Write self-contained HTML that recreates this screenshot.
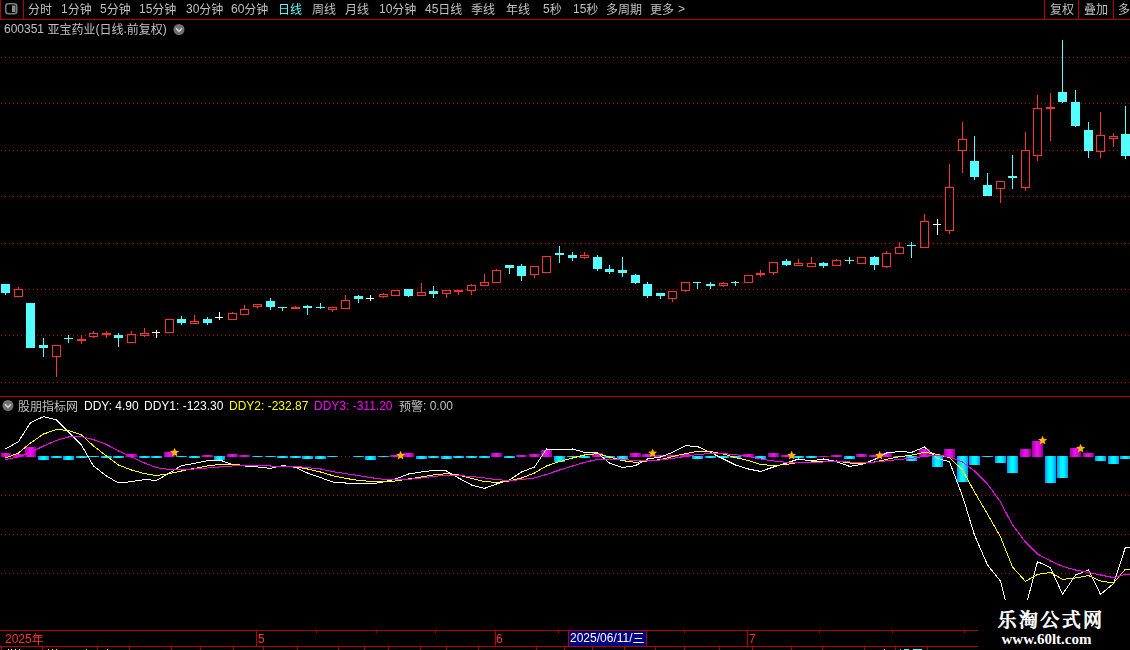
<!DOCTYPE html><html><head><meta charset="utf-8"><title>chart</title><style>
html,body{margin:0;padding:0;background:#000;}
#root{position:relative;width:1130px;height:650px;overflow:hidden;background:#000;font-family:"Liberation Sans","Noto Sans CJK SC",sans-serif;font-size:12px;color:#c0c0c0;}
.c{position:relative;top:1px;}
.t{position:absolute;will-change:transform;white-space:nowrap;line-height:14px;height:14px;}
.wm1{position:absolute;left:980px;top:608px;width:142px;text-align:center;font-family:"Liberation Serif","Noto Serif CJK SC",serif;font-weight:500;-webkit-text-stroke:0.7px #fff;font-size:19px;letter-spacing:2.4px;line-height:26px;color:#fff;white-space:nowrap;}
.wm2{position:absolute;left:979px;top:630px;width:135px;text-align:center;font-family:"Liberation Serif",serif;font-weight:bold;font-size:15px;line-height:18px;color:#fff;white-space:nowrap;}
</style></head><body><div id="root">
<svg width="1130" height="650" viewBox="0 0 1130 650" style="position:absolute;left:0;top:0" shape-rendering="crispEdges">
<defs>
<pattern id="dot" x="1" y="0" width="4" height="1" patternUnits="userSpaceOnUse"><rect x="0" y="0" width="1" height="1" fill="#b00000"/></pattern>
<linearGradient id="gc" x1="0" x2="1" y1="0" y2="0"><stop offset="0" stop-color="#0090ff"/><stop offset="0.3" stop-color="#00e8ff"/><stop offset="0.5" stop-color="#00ffff"/><stop offset="0.7" stop-color="#00e8ff"/><stop offset="1" stop-color="#0090ff"/></linearGradient>
<linearGradient id="gm" x1="0" x2="1" y1="0" y2="0"><stop offset="0" stop-color="#a000a0"/><stop offset="0.3" stop-color="#dc0cdc"/><stop offset="0.5" stop-color="#ee14ee"/><stop offset="0.75" stop-color="#d008d0"/><stop offset="1" stop-color="#880088"/></linearGradient>
<clipPath id="ind"><rect x="0" y="397" width="1130" height="233"/></clipPath>
</defs>
<rect width="1130" height="650" fill="#000"/>
<rect x="0" y="57" width="1130" height="1" fill="url(#dot)"/>
<rect x="0" y="103" width="1130" height="1" fill="url(#dot)"/>
<rect x="0" y="150" width="1130" height="1" fill="url(#dot)"/>
<rect x="0" y="196" width="1130" height="1" fill="url(#dot)"/>
<rect x="0" y="243" width="1130" height="1" fill="url(#dot)"/>
<rect x="0" y="289" width="1130" height="1" fill="url(#dot)"/>
<rect x="0" y="335" width="1130" height="1" fill="url(#dot)"/>
<rect x="0" y="382" width="1130" height="1" fill="url(#dot)"/>
<rect x="0" y="456" width="1130" height="1" fill="url(#dot)"/>
<rect x="0" y="495" width="1130" height="1" fill="url(#dot)"/>
<rect x="0" y="534" width="1130" height="1" fill="url(#dot)"/>
<rect x="0" y="573" width="1130" height="1" fill="url(#dot)"/>
<rect x="5" y="284" width="1" height="11" fill="#54ffff"/>
<rect x="1" y="284" width="9" height="9" fill="#54ffff"/>
<rect x="18" y="287" width="1" height="2" fill="#ff3232"/>
<rect x="14.5" y="289.5" width="8" height="7" fill="none" stroke="#ff3232" stroke-width="1"/>
<rect x="30" y="303" width="1" height="45" fill="#54ffff"/>
<rect x="26" y="303" width="9" height="45" fill="#54ffff"/>
<rect x="43" y="338" width="1" height="19" fill="#54ffff"/>
<rect x="39" y="345" width="9" height="3" fill="#54ffff"/>
<rect x="56" y="357" width="1" height="20" fill="#ff3232"/>
<rect x="52.5" y="345.5" width="8" height="11" fill="none" stroke="#ff3232" stroke-width="1"/>
<rect x="68" y="335" width="1" height="8" fill="#54ffff"/>
<rect x="64" y="338" width="9" height="1" fill="#54ffff"/>
<rect x="81" y="335" width="1" height="9" fill="#ff3232"/>
<rect x="77" y="339" width="9" height="2" fill="#ff3232"/>
<rect x="93" y="331" width="1" height="2" fill="#ff3232"/>
<rect x="93" y="337" width="1" height="1" fill="#ff3232"/>
<rect x="89.5" y="333.5" width="8" height="3" fill="none" stroke="#ff3232" stroke-width="1"/>
<rect x="106" y="331" width="1" height="7" fill="#ff3232"/>
<rect x="102" y="333" width="9" height="2" fill="#ff3232"/>
<rect x="118" y="333" width="1" height="14" fill="#54ffff"/>
<rect x="114" y="335" width="9" height="3" fill="#54ffff"/>
<rect x="131" y="331" width="1" height="3" fill="#ff3232"/>
<rect x="127.5" y="334.5" width="8" height="8" fill="none" stroke="#ff3232" stroke-width="1"/>
<rect x="144" y="328" width="1" height="5" fill="#ff3232"/>
<rect x="144" y="336" width="1" height="1" fill="#ff3232"/>
<rect x="140.5" y="333.5" width="8" height="2" fill="none" stroke="#ff3232" stroke-width="1"/>
<rect x="156" y="330" width="1" height="8" fill="#ffffff"/>
<rect x="152" y="332" width="8" height="1" fill="#ffffff"/>
<rect x="165.5" y="319.5" width="8" height="13" fill="none" stroke="#ff3232" stroke-width="1"/>
<rect x="181" y="316" width="1" height="9" fill="#54ffff"/>
<rect x="177" y="319" width="9" height="4" fill="#54ffff"/>
<rect x="194" y="315" width="1" height="6" fill="#ff3232"/>
<rect x="190.5" y="321.5" width="8" height="2" fill="none" stroke="#ff3232" stroke-width="1"/>
<rect x="207" y="317" width="1" height="8" fill="#54ffff"/>
<rect x="203" y="319" width="9" height="4" fill="#54ffff"/>
<rect x="219" y="312" width="1" height="8" fill="#ffffff"/>
<rect x="215" y="317" width="8" height="1" fill="#ffffff"/>
<rect x="232" y="312" width="1" height="1" fill="#ff3232"/>
<rect x="228.5" y="313.5" width="8" height="6" fill="none" stroke="#ff3232" stroke-width="1"/>
<rect x="244" y="305" width="1" height="4" fill="#ff3232"/>
<rect x="240.5" y="309.5" width="8" height="5" fill="none" stroke="#ff3232" stroke-width="1"/>
<rect x="257" y="307" width="1" height="1" fill="#ff3232"/>
<rect x="253.5" y="304.5" width="8" height="2" fill="none" stroke="#ff3232" stroke-width="1"/>
<rect x="270" y="298" width="1" height="12" fill="#54ffff"/>
<rect x="266" y="301" width="9" height="6" fill="#54ffff"/>
<rect x="282" y="307" width="1" height="4" fill="#54ffff"/>
<rect x="278" y="307" width="9" height="1" fill="#54ffff"/>
<rect x="295" y="306" width="1" height="3" fill="#ff3232"/>
<rect x="291" y="307" width="9" height="2" fill="#ff3232"/>
<rect x="307" y="305" width="1" height="10" fill="#54ffff"/>
<rect x="303" y="306" width="9" height="2" fill="#54ffff"/>
<rect x="320" y="303" width="1" height="6" fill="#54ffff"/>
<rect x="316" y="307" width="9" height="1" fill="#54ffff"/>
<rect x="332" y="310" width="1" height="2" fill="#ff3232"/>
<rect x="328.5" y="307.5" width="8" height="2" fill="none" stroke="#ff3232" stroke-width="1"/>
<rect x="345" y="295" width="1" height="5" fill="#ff3232"/>
<rect x="341.5" y="300.5" width="8" height="8" fill="none" stroke="#ff3232" stroke-width="1"/>
<rect x="358" y="295" width="1" height="8" fill="#54ffff"/>
<rect x="354" y="296" width="9" height="3" fill="#54ffff"/>
<rect x="370" y="295" width="1" height="6" fill="#ffffff"/>
<rect x="366" y="298" width="8" height="1" fill="#ffffff"/>
<rect x="383" y="293" width="1" height="1" fill="#ff3232"/>
<rect x="383" y="297" width="1" height="1" fill="#ff3232"/>
<rect x="379.5" y="294.5" width="8" height="2" fill="none" stroke="#ff3232" stroke-width="1"/>
<rect x="391.5" y="290.5" width="8" height="5" fill="none" stroke="#ff3232" stroke-width="1"/>
<rect x="408" y="289" width="1" height="8" fill="#54ffff"/>
<rect x="404" y="289" width="9" height="7" fill="#54ffff"/>
<rect x="421" y="283" width="1" height="9" fill="#ff3232"/>
<rect x="417.5" y="292.5" width="8" height="3" fill="none" stroke="#ff3232" stroke-width="1"/>
<rect x="433" y="286" width="1" height="12" fill="#54ffff"/>
<rect x="429" y="291" width="9" height="3" fill="#54ffff"/>
<rect x="446" y="294" width="1" height="4" fill="#ff3232"/>
<rect x="442.5" y="290.5" width="8" height="3" fill="none" stroke="#ff3232" stroke-width="1"/>
<rect x="458" y="290" width="1" height="5" fill="#ff3232"/>
<rect x="454" y="290" width="9" height="2" fill="#ff3232"/>
<rect x="471" y="284" width="1" height="1" fill="#ff3232"/>
<rect x="471" y="291" width="1" height="4" fill="#ff3232"/>
<rect x="467.5" y="285.5" width="8" height="5" fill="none" stroke="#ff3232" stroke-width="1"/>
<rect x="484" y="274" width="1" height="8" fill="#ff3232"/>
<rect x="480.5" y="282.5" width="8" height="3" fill="none" stroke="#ff3232" stroke-width="1"/>
<rect x="496" y="269" width="1" height="1" fill="#ff3232"/>
<rect x="492.5" y="270.5" width="8" height="12" fill="none" stroke="#ff3232" stroke-width="1"/>
<rect x="509" y="265" width="1" height="9" fill="#54ffff"/>
<rect x="505" y="265" width="9" height="3" fill="#54ffff"/>
<rect x="521" y="264" width="1" height="17" fill="#54ffff"/>
<rect x="517" y="266" width="9" height="10" fill="#54ffff"/>
<rect x="534" y="275" width="1" height="3" fill="#ff3232"/>
<rect x="530.5" y="266.5" width="8" height="8" fill="none" stroke="#ff3232" stroke-width="1"/>
<rect x="542.5" y="256.5" width="8" height="16" fill="none" stroke="#ff3232" stroke-width="1"/>
<rect x="559" y="246" width="1" height="17" fill="#54ffff"/>
<rect x="555" y="253" width="9" height="2" fill="#54ffff"/>
<rect x="572" y="252" width="1" height="9" fill="#54ffff"/>
<rect x="568" y="255" width="9" height="3" fill="#54ffff"/>
<rect x="584" y="252" width="1" height="3" fill="#ff3232"/>
<rect x="584" y="258" width="1" height="1" fill="#ff3232"/>
<rect x="580.5" y="255.5" width="8" height="2" fill="none" stroke="#ff3232" stroke-width="1"/>
<rect x="597" y="255" width="1" height="16" fill="#54ffff"/>
<rect x="593" y="257" width="9" height="12" fill="#54ffff"/>
<rect x="609" y="265" width="1" height="9" fill="#54ffff"/>
<rect x="605" y="269" width="9" height="3" fill="#54ffff"/>
<rect x="622" y="257" width="1" height="20" fill="#54ffff"/>
<rect x="618" y="270" width="9" height="3" fill="#54ffff"/>
<rect x="635" y="274" width="1" height="10" fill="#54ffff"/>
<rect x="631" y="275" width="9" height="8" fill="#54ffff"/>
<rect x="647" y="282" width="1" height="16" fill="#54ffff"/>
<rect x="643" y="284" width="9" height="12" fill="#54ffff"/>
<rect x="660" y="293" width="1" height="6" fill="#54ffff"/>
<rect x="656" y="293" width="9" height="3" fill="#54ffff"/>
<rect x="672" y="299" width="1" height="3" fill="#ff3232"/>
<rect x="668.5" y="291.5" width="8" height="7" fill="none" stroke="#ff3232" stroke-width="1"/>
<rect x="685" y="291" width="1" height="1" fill="#ff3232"/>
<rect x="681.5" y="282.5" width="8" height="8" fill="none" stroke="#ff3232" stroke-width="1"/>
<rect x="697" y="282" width="1" height="7" fill="#54ffff"/>
<rect x="693" y="282" width="8" height="1" fill="#54ffff"/>
<rect x="710" y="282" width="1" height="7" fill="#54ffff"/>
<rect x="706" y="284" width="9" height="2" fill="#54ffff"/>
<rect x="723" y="282" width="1" height="1" fill="#ff3232"/>
<rect x="723" y="286" width="1" height="1" fill="#ff3232"/>
<rect x="719.5" y="283.5" width="8" height="2" fill="none" stroke="#ff3232" stroke-width="1"/>
<rect x="735" y="281" width="1" height="5" fill="#54ffff"/>
<rect x="731" y="282" width="8" height="1" fill="#54ffff"/>
<rect x="744.5" y="275.5" width="8" height="7" fill="none" stroke="#ff3232" stroke-width="1"/>
<rect x="760" y="270" width="1" height="7" fill="#ff3232"/>
<rect x="756" y="273" width="9" height="2" fill="#ff3232"/>
<rect x="773" y="273" width="1" height="2" fill="#ff3232"/>
<rect x="769.5" y="262.5" width="8" height="10" fill="none" stroke="#ff3232" stroke-width="1"/>
<rect x="786" y="259" width="1" height="7" fill="#54ffff"/>
<rect x="782" y="261" width="9" height="4" fill="#54ffff"/>
<rect x="798" y="259" width="1" height="4" fill="#ff3232"/>
<rect x="794.5" y="263.5" width="8" height="2" fill="none" stroke="#ff3232" stroke-width="1"/>
<rect x="811" y="257" width="1" height="6" fill="#ff3232"/>
<rect x="807.5" y="263.5" width="8" height="3" fill="none" stroke="#ff3232" stroke-width="1"/>
<rect x="823" y="262" width="1" height="6" fill="#54ffff"/>
<rect x="819" y="263" width="9" height="3" fill="#54ffff"/>
<rect x="836" y="259" width="1" height="1" fill="#ff3232"/>
<rect x="832.5" y="260.5" width="8" height="5" fill="none" stroke="#ff3232" stroke-width="1"/>
<rect x="849" y="257" width="1" height="7" fill="#54ffff"/>
<rect x="845" y="260" width="9" height="1" fill="#54ffff"/>
<rect x="857.5" y="257.5" width="8" height="6" fill="none" stroke="#ff3232" stroke-width="1"/>
<rect x="874" y="256" width="1" height="14" fill="#54ffff"/>
<rect x="870" y="257" width="9" height="8" fill="#54ffff"/>
<rect x="886" y="251" width="1" height="2" fill="#ff3232"/>
<rect x="886" y="267" width="1" height="1" fill="#ff3232"/>
<rect x="882.5" y="253.5" width="8" height="13" fill="none" stroke="#ff3232" stroke-width="1"/>
<rect x="899" y="242" width="1" height="5" fill="#ff3232"/>
<rect x="895.5" y="247.5" width="8" height="6" fill="none" stroke="#ff3232" stroke-width="1"/>
<rect x="911" y="242" width="1" height="16" fill="#54ffff"/>
<rect x="907" y="245" width="9" height="1" fill="#54ffff"/>
<rect x="924" y="214" width="1" height="7" fill="#ff3232"/>
<rect x="920.5" y="221.5" width="8" height="26" fill="none" stroke="#ff3232" stroke-width="1"/>
<rect x="937" y="219" width="1" height="16" fill="#ffffff"/>
<rect x="933" y="224" width="8" height="1" fill="#ffffff"/>
<rect x="949" y="164" width="1" height="23" fill="#ff3232"/>
<rect x="949" y="231" width="1" height="3" fill="#ff3232"/>
<rect x="945.5" y="187.5" width="8" height="43" fill="none" stroke="#ff3232" stroke-width="1"/>
<rect x="962" y="122" width="1" height="17" fill="#ff3232"/>
<rect x="962" y="151" width="1" height="22" fill="#ff3232"/>
<rect x="958.5" y="139.5" width="8" height="11" fill="none" stroke="#ff3232" stroke-width="1"/>
<rect x="974" y="136" width="1" height="44" fill="#54ffff"/>
<rect x="970" y="161" width="9" height="16" fill="#54ffff"/>
<rect x="987" y="173" width="1" height="23" fill="#54ffff"/>
<rect x="983" y="185" width="9" height="11" fill="#54ffff"/>
<rect x="1000" y="189" width="1" height="14" fill="#ff3232"/>
<rect x="996.5" y="181.5" width="8" height="7" fill="none" stroke="#ff3232" stroke-width="1"/>
<rect x="1012" y="155" width="1" height="34" fill="#54ffff"/>
<rect x="1008" y="176" width="9" height="2" fill="#54ffff"/>
<rect x="1025" y="132" width="1" height="18" fill="#ff3232"/>
<rect x="1025" y="188" width="1" height="3" fill="#ff3232"/>
<rect x="1021.5" y="150.5" width="8" height="37" fill="none" stroke="#ff3232" stroke-width="1"/>
<rect x="1037" y="95" width="1" height="13" fill="#ff3232"/>
<rect x="1037" y="156" width="1" height="5" fill="#ff3232"/>
<rect x="1033.5" y="108.5" width="8" height="47" fill="none" stroke="#ff3232" stroke-width="1"/>
<rect x="1050" y="93" width="1" height="48" fill="#ff3232"/>
<rect x="1046" y="107" width="9" height="2" fill="#ff3232"/>
<rect x="1062" y="40" width="1" height="63" fill="#54ffff"/>
<rect x="1058" y="92" width="9" height="10" fill="#54ffff"/>
<rect x="1075" y="90" width="1" height="37" fill="#54ffff"/>
<rect x="1071" y="102" width="9" height="24" fill="#54ffff"/>
<rect x="1088" y="122" width="1" height="36" fill="#54ffff"/>
<rect x="1084" y="130" width="9" height="21" fill="#54ffff"/>
<rect x="1100" y="112" width="1" height="23" fill="#ff3232"/>
<rect x="1100" y="152" width="1" height="6" fill="#ff3232"/>
<rect x="1096.5" y="135.5" width="8" height="16" fill="none" stroke="#ff3232" stroke-width="1"/>
<rect x="1113" y="133" width="1" height="3" fill="#ff3232"/>
<rect x="1113" y="139" width="1" height="8" fill="#ff3232"/>
<rect x="1109.5" y="136.5" width="8" height="2" fill="none" stroke="#ff3232" stroke-width="1"/>
<rect x="1125" y="106" width="1" height="53" fill="#54ffff"/>
<rect x="1121" y="134" width="9" height="22" fill="#54ffff"/>
<rect x="1" y="453" width="10" height="4" fill="url(#gm)"/>
<rect x="13" y="454" width="11" height="3" fill="url(#gm)"/>
<rect x="25" y="447" width="11" height="10" fill="url(#gm)"/>
<rect x="38" y="456" width="11" height="4" fill="url(#gc)"/>
<rect x="51" y="456" width="11" height="2" fill="url(#gc)"/>
<rect x="63" y="456" width="11" height="4" fill="url(#gc)"/>
<rect x="76" y="456" width="11" height="2" fill="url(#gc)"/>
<rect x="88" y="456" width="11" height="1" fill="url(#gc)"/>
<rect x="101" y="456" width="11" height="2" fill="url(#gc)"/>
<rect x="113" y="456" width="11" height="2" fill="url(#gc)"/>
<rect x="126" y="454" width="11" height="3" fill="url(#gm)"/>
<rect x="139" y="456" width="11" height="2" fill="url(#gc)"/>
<rect x="151" y="456" width="11" height="2" fill="url(#gc)"/>
<rect x="164" y="452" width="11" height="5" fill="url(#gm)"/>
<rect x="176" y="456" width="11" height="1" fill="url(#gc)"/>
<rect x="189" y="456" width="11" height="2" fill="url(#gc)"/>
<rect x="202" y="455" width="11" height="2" fill="url(#gm)"/>
<rect x="214" y="456" width="11" height="4" fill="url(#gc)"/>
<rect x="227" y="454" width="11" height="3" fill="url(#gm)"/>
<rect x="239" y="455" width="11" height="2" fill="url(#gm)"/>
<rect x="252" y="456" width="11" height="1" fill="url(#gc)"/>
<rect x="265" y="456" width="11" height="1" fill="url(#gc)"/>
<rect x="277" y="456" width="11" height="2" fill="url(#gc)"/>
<rect x="290" y="456" width="11" height="2" fill="url(#gc)"/>
<rect x="302" y="456" width="11" height="3" fill="url(#gc)"/>
<rect x="315" y="456" width="11" height="3" fill="url(#gc)"/>
<rect x="327" y="456" width="11" height="1" fill="url(#gc)"/>
<rect x="353" y="456" width="11" height="1" fill="url(#gc)"/>
<rect x="365" y="456" width="11" height="4" fill="url(#gc)"/>
<rect x="378" y="456" width="11" height="1" fill="url(#gc)"/>
<rect x="390" y="455" width="11" height="2" fill="url(#gm)"/>
<rect x="403" y="453" width="11" height="4" fill="url(#gm)"/>
<rect x="416" y="456" width="11" height="3" fill="url(#gc)"/>
<rect x="428" y="456" width="11" height="2" fill="url(#gc)"/>
<rect x="441" y="456" width="11" height="3" fill="url(#gc)"/>
<rect x="453" y="456" width="11" height="2" fill="url(#gc)"/>
<rect x="466" y="456" width="11" height="2" fill="url(#gc)"/>
<rect x="479" y="456" width="11" height="2" fill="url(#gc)"/>
<rect x="491" y="453" width="11" height="4" fill="url(#gm)"/>
<rect x="504" y="456" width="11" height="2" fill="url(#gc)"/>
<rect x="516" y="455" width="11" height="2" fill="url(#gm)"/>
<rect x="529" y="454" width="11" height="3" fill="url(#gm)"/>
<rect x="541" y="450" width="11" height="7" fill="url(#gm)"/>
<rect x="554" y="456" width="11" height="6" fill="url(#gc)"/>
<rect x="567" y="456" width="11" height="1" fill="url(#gc)"/>
<rect x="579" y="456" width="11" height="2" fill="url(#gc)"/>
<rect x="592" y="453" width="11" height="4" fill="url(#gm)"/>
<rect x="604" y="456" width="11" height="2" fill="url(#gc)"/>
<rect x="617" y="456" width="11" height="4" fill="url(#gc)"/>
<rect x="630" y="453" width="11" height="4" fill="url(#gm)"/>
<rect x="642" y="454" width="11" height="3" fill="url(#gm)"/>
<rect x="655" y="455" width="11" height="2" fill="url(#gm)"/>
<rect x="667" y="455" width="11" height="2" fill="url(#gm)"/>
<rect x="680" y="454" width="11" height="3" fill="url(#gm)"/>
<rect x="692" y="456" width="11" height="3" fill="url(#gc)"/>
<rect x="705" y="456" width="11" height="2" fill="url(#gc)"/>
<rect x="718" y="456" width="11" height="2" fill="url(#gc)"/>
<rect x="730" y="456" width="11" height="2" fill="url(#gc)"/>
<rect x="743" y="454" width="11" height="3" fill="url(#gm)"/>
<rect x="755" y="456" width="11" height="3" fill="url(#gc)"/>
<rect x="768" y="453" width="11" height="4" fill="url(#gm)"/>
<rect x="781" y="455" width="11" height="2" fill="url(#gm)"/>
<rect x="793" y="456" width="11" height="2" fill="url(#gc)"/>
<rect x="806" y="456" width="11" height="2" fill="url(#gc)"/>
<rect x="818" y="456" width="11" height="1" fill="url(#gm)"/>
<rect x="831" y="455" width="11" height="2" fill="url(#gm)"/>
<rect x="844" y="456" width="11" height="3" fill="url(#gc)"/>
<rect x="856" y="454" width="11" height="3" fill="url(#gm)"/>
<rect x="869" y="455" width="11" height="2" fill="url(#gm)"/>
<rect x="881" y="453" width="11" height="4" fill="url(#gm)"/>
<rect x="894" y="456" width="11" height="1" fill="url(#gc)"/>
<rect x="906" y="456" width="11" height="5" fill="url(#gc)"/>
<rect x="919" y="449" width="11" height="8" fill="url(#gm)"/>
<rect x="932" y="456" width="11" height="11" fill="url(#gc)"/>
<rect x="944" y="449" width="11" height="8" fill="url(#gm)"/>
<rect x="957" y="456" width="11" height="26" fill="url(#gc)"/>
<rect x="969" y="456" width="11" height="9" fill="url(#gc)"/>
<rect x="982" y="456" width="11" height="1" fill="url(#gc)"/>
<rect x="995" y="456" width="11" height="7" fill="url(#gc)"/>
<rect x="1007" y="456" width="11" height="17" fill="url(#gc)"/>
<rect x="1020" y="449" width="11" height="8" fill="url(#gm)"/>
<rect x="1032" y="441" width="11" height="16" fill="url(#gm)"/>
<rect x="1045" y="456" width="11" height="27" fill="url(#gc)"/>
<rect x="1057" y="456" width="11" height="22" fill="url(#gc)"/>
<rect x="1070" y="448" width="11" height="9" fill="url(#gm)"/>
<rect x="1083" y="453" width="11" height="4" fill="url(#gm)"/>
<rect x="1095" y="456" width="11" height="5" fill="url(#gc)"/>
<rect x="1108" y="456" width="11" height="8" fill="url(#gc)"/>
<rect x="1120" y="456" width="11" height="3" fill="url(#gc)"/>
<polyline points="5.5,449.0 18.5,441.6 30.5,422.6 43.5,416.6 56.5,420.0 68.5,432.0 81.5,445.0 93.5,466.0 106.5,476.0 118.5,483.0 131.5,481.6 144.5,479.6 156.5,480.4 169.5,473.0 181.5,465.6 194.5,463.4 207.5,460.6 219.5,460.0 232.5,464.4 244.5,466.0 257.5,467.0 270.5,468.4 282.5,465.6 295.5,467.4 307.5,473.0 320.5,477.6 332.5,482.0 345.5,483.0 358.5,483.0 370.5,484.0 383.5,482.0 395.5,479.0 408.5,474.0 421.5,472.0 433.5,470.4 446.5,471.0 458.5,478.0 471.5,485.0 484.5,488.4 496.5,484.0 509.5,480.0 521.5,472.0 534.5,467.0 546.5,449.0 559.5,450.0 572.5,449.0 584.5,452.4 597.5,453.0 609.5,463.0 622.5,467.6 635.5,465.6 647.5,459.0 660.5,457.0 672.5,452.4 685.5,445.6 697.5,446.6 710.5,452.4 723.5,459.0 735.5,465.0 748.5,469.0 760.5,471.4 773.5,467.0 786.5,463.0 798.5,459.0 811.5,461.0 823.5,459.0 836.5,461.6 849.5,466.4 861.5,464.4 874.5,459.5 886.5,453.0 899.5,451.4 911.5,452.4 924.5,447.0 937.5,458.2 949.5,461.9 962.5,496.0 974.5,535.0 987.5,565.0 1000.5,581.0 1012.5,629.0 1025.5,608.0 1037.5,561.6 1050.5,567.6 1062.5,594.4 1075.5,575.0 1088.5,570.0 1100.5,594.4 1113.5,583.6 1125.5,547.0 1130,547.0" fill="none" stroke="#ffffff" stroke-width="1" shape-rendering="crispEdges" clip-path="url(#ind)"/>
<polyline points="5.5,458.0 18.5,453.0 30.5,443.0 43.5,434.0 56.5,429.6 68.5,430.4 81.5,435.0 93.5,446.0 106.5,456.0 118.5,465.0 131.5,470.0 144.5,473.6 156.5,475.6 169.5,473.6 181.5,471.0 194.5,468.4 207.5,466.0 219.5,464.4 232.5,464.4 244.5,465.4 257.5,465.4 270.5,466.0 282.5,466.0 295.5,466.6 307.5,469.0 320.5,472.0 332.5,475.6 345.5,478.4 358.5,480.4 370.5,481.4 383.5,481.4 395.5,481.0 408.5,479.0 421.5,477.0 433.5,475.0 446.5,473.6 458.5,475.0 471.5,478.4 484.5,481.6 496.5,482.4 509.5,481.0 521.5,478.0 534.5,473.0 546.5,466.0 559.5,461.6 572.5,458.0 584.5,455.0 597.5,453.6 609.5,457.0 622.5,460.6 635.5,462.4 647.5,461.0 660.5,459.6 672.5,456.6 685.5,453.6 697.5,451.4 710.5,451.6 723.5,454.0 735.5,457.6 748.5,460.6 760.5,464.4 773.5,465.6 786.5,464.4 798.5,462.4 811.5,462.0 823.5,461.6 836.5,461.0 849.5,463.0 861.5,463.6 874.5,461.9 886.5,459.4 899.5,456.8 911.5,455.1 924.5,452.3 937.5,454.5 949.5,457.5 962.5,470.0 974.5,492.0 987.5,514.0 1000.5,537.0 1012.5,567.0 1025.5,581.4 1037.5,574.4 1050.5,572.4 1062.5,579.4 1075.5,578.0 1088.5,575.6 1100.5,581.0 1113.5,583.0 1125.5,569.0 1130,569.0" fill="none" stroke="#ffff00" stroke-width="1" shape-rendering="crispEdges" clip-path="url(#ind)"/>
<polyline points="5.5,459.6 18.5,457.0 30.5,452.4 43.5,446.0 56.5,440.4 68.5,437.0 81.5,436.6 93.5,439.6 106.5,444.4 118.5,451.0 131.5,457.0 144.5,463.0 156.5,467.6 169.5,469.6 181.5,469.6 194.5,469.0 207.5,468.0 219.5,467.0 232.5,466.0 244.5,465.4 257.5,465.4 270.5,466.0 282.5,466.0 295.5,466.4 307.5,467.6 320.5,469.0 332.5,471.6 345.5,473.6 358.5,475.6 370.5,477.6 383.5,479.4 395.5,479.6 408.5,479.4 421.5,478.0 433.5,476.4 446.5,475.3 458.5,475.6 471.5,476.4 484.5,478.0 496.5,479.6 509.5,480.6 521.5,479.6 534.5,478.0 546.5,474.4 559.5,470.0 572.5,466.0 584.5,462.4 597.5,459.4 609.5,459.0 622.5,459.6 635.5,460.4 647.5,460.4 660.5,460.0 672.5,458.4 685.5,456.4 697.5,454.4 710.5,453.6 723.5,453.6 735.5,454.6 748.5,456.4 760.5,459.0 773.5,461.0 786.5,462.4 798.5,462.4 811.5,462.4 823.5,462.0 836.5,461.6 849.5,462.0 861.5,462.6 874.5,462.1 886.5,460.9 899.5,459.4 911.5,458.4 924.5,456.3 937.5,455.1 949.5,456.8 962.5,462.0 974.5,471.0 987.5,484.0 1000.5,502.0 1012.5,525.0 1025.5,542.0 1037.5,554.0 1050.5,561.0 1062.5,566.4 1075.5,570.0 1088.5,572.4 1100.5,575.0 1113.5,577.6 1125.5,574.4 1130,574.4" fill="none" stroke="#ff00ff" stroke-width="1" shape-rendering="crispEdges" clip-path="url(#ind)"/>
<polygon points="174.60,447.70 175.90,450.71 179.17,451.02 176.70,453.18 177.42,456.38 174.60,454.71 171.78,456.38 172.50,453.18 170.03,451.02 173.30,450.71" fill="#ffb400" shape-rendering="auto"/>
<polygon points="400.60,450.70 401.90,453.71 405.17,454.02 402.70,456.18 403.42,459.38 400.60,457.71 397.78,459.38 398.50,456.18 396.03,454.02 399.30,453.71" fill="#ffb400" shape-rendering="auto"/>
<polygon points="652.60,448.50 653.90,451.51 657.17,451.82 654.70,453.98 655.42,457.18 652.60,455.51 649.78,457.18 650.50,453.98 648.03,451.82 651.30,451.51" fill="#ffb400" shape-rendering="auto"/>
<polygon points="791.60,450.70 792.90,453.71 796.17,454.02 793.70,456.18 794.42,459.38 791.60,457.71 788.78,459.38 789.50,456.18 787.03,454.02 790.30,453.71" fill="#ffb400" shape-rendering="auto"/>
<polygon points="879.60,450.70 880.90,453.71 884.17,454.02 881.70,456.18 882.42,459.38 879.60,457.71 876.78,459.38 877.50,456.18 875.03,454.02 878.30,453.71" fill="#ffb400" shape-rendering="auto"/>
<polygon points="1042.60,435.70 1043.90,438.71 1047.17,439.02 1044.70,441.18 1045.42,444.38 1042.60,442.71 1039.78,444.38 1040.50,441.18 1038.03,439.02 1041.30,438.71" fill="#ffb400" shape-rendering="auto"/>
<polygon points="1080.60,443.70 1081.90,446.71 1085.17,447.02 1082.70,449.18 1083.42,452.38 1080.60,450.71 1077.78,452.38 1078.50,449.18 1076.03,447.02 1079.30,446.71" fill="#ffb400" shape-rendering="auto"/>
<rect x="0" y="396" width="1130" height="1" fill="#b40000"/>
<rect x="0" y="19" width="1130" height="1" fill="#b40000"/>
<rect x="0" y="0" width="1" height="20" fill="#b40000"/>
<rect x="23" y="0" width="1" height="20" fill="#b40000"/>
<rect x="1044" y="0" width="1" height="20" fill="#b40000"/>
<rect x="1078" y="0" width="1" height="20" fill="#b40000"/>
<rect x="1113" y="0" width="1" height="20" fill="#b40000"/>
<rect x="5.75" y="3.75" width="11" height="10" rx="2.5" ry="2.5" fill="none" stroke="#7c7c7c" stroke-width="1.5" shape-rendering="auto"/>
<rect x="12" y="5.5" width="3.5" height="6.5" fill="#8c8c8c" shape-rendering="auto"/>
<rect x="0" y="630" width="978" height="1" fill="#b40000"/>
<rect x="0" y="646" width="978" height="1" fill="#b40000"/>
<rect x="256" y="630" width="1" height="17" fill="#b40000"/>
<rect x="495" y="630" width="1" height="17" fill="#b40000"/>
<rect x="747" y="630" width="1" height="17" fill="#b40000"/>
<rect x="316" y="630" width="1" height="3" fill="#b40000"/>
<rect x="376" y="630" width="1" height="3" fill="#b40000"/>
<rect x="435" y="630" width="1" height="3" fill="#b40000"/>
<rect x="558" y="630" width="1" height="3" fill="#b40000"/>
<rect x="684" y="630" width="1" height="3" fill="#b40000"/>
<rect x="819" y="630" width="1" height="3" fill="#b40000"/>
<rect x="892" y="630" width="1" height="3" fill="#b40000"/>
<rect x="964" y="630" width="1" height="3" fill="#b40000"/>
<rect x="1" y="646" width="1" height="4" fill="#b40000"/>
<rect x="42" y="646" width="1" height="4" fill="#b40000"/>
<rect x="97" y="646" width="1" height="4" fill="#b40000"/>
<rect x="129" y="646" width="1" height="4" fill="#b40000"/>
<rect x="171" y="646" width="1" height="4" fill="#b40000"/>
<rect x="200" y="646" width="1" height="4" fill="#b40000"/>
<rect x="233" y="646" width="1" height="4" fill="#b40000"/>
<rect x="263" y="646" width="1" height="4" fill="#b40000"/>
<rect x="297" y="646" width="1" height="4" fill="#b40000"/>
<rect x="338" y="646" width="1" height="4" fill="#b40000"/>
<rect x="364" y="646" width="1" height="4" fill="#b40000"/>
<rect x="388" y="646" width="1" height="4" fill="#b40000"/>
<rect x="420" y="646" width="1" height="4" fill="#b40000"/>
<rect x="446" y="646" width="1" height="4" fill="#b40000"/>
<rect x="478" y="646" width="1" height="4" fill="#b40000"/>
<rect x="536" y="646" width="1" height="4" fill="#b40000"/>
<rect x="564" y="646" width="1" height="4" fill="#b40000"/>
<rect x="592" y="646" width="1" height="4" fill="#b40000"/>
<rect x="624" y="646" width="1" height="4" fill="#b40000"/>
<rect x="655" y="646" width="1" height="4" fill="#b40000"/>
<rect x="684" y="646" width="1" height="4" fill="#b40000"/>
<rect x="719" y="646" width="1" height="4" fill="#b40000"/>
<rect x="752" y="646" width="1" height="4" fill="#b40000"/>
<rect x="791" y="646" width="1" height="4" fill="#b40000"/>
<rect x="822" y="646" width="1" height="4" fill="#b40000"/>
<rect x="864" y="646" width="1" height="4" fill="#b40000"/>
<rect x="895" y="646" width="1" height="4" fill="#b40000"/>
<rect x="927" y="646" width="1" height="4" fill="#b40000"/>
<rect x="569" y="631" width="77" height="15" fill="#000080"/>
<rect x="568" y="630" width="1" height="17" fill="#b40000"/>
<rect x="646" y="630" width="1" height="17" fill="#b40000"/>
<rect x="978" y="600" width="152" height="50" fill="#000"/>
<circle cx="179" cy="29.5" r="5.5" fill="#707070" shape-rendering="auto"/>
<polyline points="176,28.3 179,31.3 182,28.3" fill="none" stroke="#d8d8d8" stroke-width="1.5" shape-rendering="auto"/>
<circle cx="8" cy="405.5" r="5.5" fill="#707070" shape-rendering="auto"/>
<polyline points="5,404.3 8,407.3 11,404.3" fill="none" stroke="#d8d8d8" stroke-width="1.5" shape-rendering="auto"/>
<rect x="8" y="649" width="1" height="1" fill="#fff"/>
<rect x="11" y="649" width="1" height="1" fill="#fff"/>
<rect x="15" y="649" width="1" height="1" fill="#fff"/>
<rect x="19" y="649" width="1" height="1" fill="#fff"/>
<rect x="48" y="649" width="1" height="1" fill="#ff0"/>
<rect x="52" y="649" width="1" height="1" fill="#ff0"/>
<rect x="56" y="649" width="1" height="1" fill="#ff0"/>
<rect x="86" y="649" width="1" height="1" fill="#ff0"/>
<rect x="107" y="649" width="1" height="1" fill="#fff"/>
<rect x="884" y="649" width="1" height="1" fill="#fff"/>
<rect x="900" y="649" width="1" height="1" fill="#54ffff"/>
<rect x="904" y="649" width="5" height="1" fill="#54ffff"/>
<rect x="913" y="649" width="9" height="1" fill="#54ffff"/>
</svg>
<div class="t" style="left:28px;top:2px;"><span class="c">分时</span></div>
<div class="t" style="left:61px;top:2px;">1<span class="c">分钟</span></div>
<div class="t" style="left:100px;top:2px;">5<span class="c">分钟</span></div>
<div class="t" style="left:139px;top:2px;">15<span class="c">分钟</span></div>
<div class="t" style="left:186px;top:2px;">30<span class="c">分钟</span></div>
<div class="t" style="left:231px;top:2px;">60<span class="c">分钟</span></div>
<div class="t" style="left:278px;top:2px;color:#54ffff;"><span class="c">日线</span></div>
<div class="t" style="left:312px;top:2px;"><span class="c">周线</span></div>
<div class="t" style="left:345px;top:2px;"><span class="c">月线</span></div>
<div class="t" style="left:379px;top:2px;">10<span class="c">分钟</span></div>
<div class="t" style="left:425px;top:2px;">45<span class="c">日线</span></div>
<div class="t" style="left:471px;top:2px;"><span class="c">季线</span></div>
<div class="t" style="left:506px;top:2px;"><span class="c">年线</span></div>
<div class="t" style="left:543px;top:2px;">5<span class="c">秒</span></div>
<div class="t" style="left:573px;top:2px;">15<span class="c">秒</span></div>
<div class="t" style="left:606px;top:2px;"><span class="c">多周期</span></div>
<div class="t" style="left:650px;top:2px;"><span class="c">更多</span></div>
<div class="t" style="left:678px;top:2px;">&gt;</div>
<div class="t" style="left:1050px;top:2px;"><span class="c">复权</span></div>
<div class="t" style="left:1084px;top:2px;"><span class="c">叠加</span></div>
<div class="t" style="left:1118px;top:2px;"><span class="c">多周</span></div>
<div class="t" style="left:4px;top:22px;">600351 <span class="c">亚宝药业</span>(<span class="c">日线</span>.<span class="c">前复权</span>)</div>
<div class="t" style="left:18px;top:399px;color:#c0c0c0"><span class="c">股朋指标网</span></div>
<div class="t" style="left:84px;top:399px;color:#fff">DDY: 4.90</div>
<div class="t" style="left:144px;top:399px;color:#fff">DDY1: -123.30</div>
<div class="t" style="left:229px;top:399px;color:#ffff00">DDY2: -232.87</div>
<div class="t" style="left:314px;top:399px;color:#ff00ff">DDY3: -311.20</div>
<div class="t" style="left:399px;top:399px;color:#c0c0c0"><span class="c">预警</span>: 0.00</div>
<div class="t" style="left:5px;top:632px;color:#ff3232;">2025<span class="c">年</span></div>
<div class="t" style="left:258px;top:632px;color:#ff3232;">5</div>
<div class="t" style="left:496px;top:632px;color:#ff3232;">6</div>
<div class="t" style="left:749px;top:632px;color:#ff3232;">7</div>
<div class="t" style="left:570px;top:631px;color:#fff;">2025/06/11/<span class="c">三</span></div>
<div class="wm1">乐淘公式网</div>
<div class="wm2">www.60lt.com</div>
</div></body></html>
